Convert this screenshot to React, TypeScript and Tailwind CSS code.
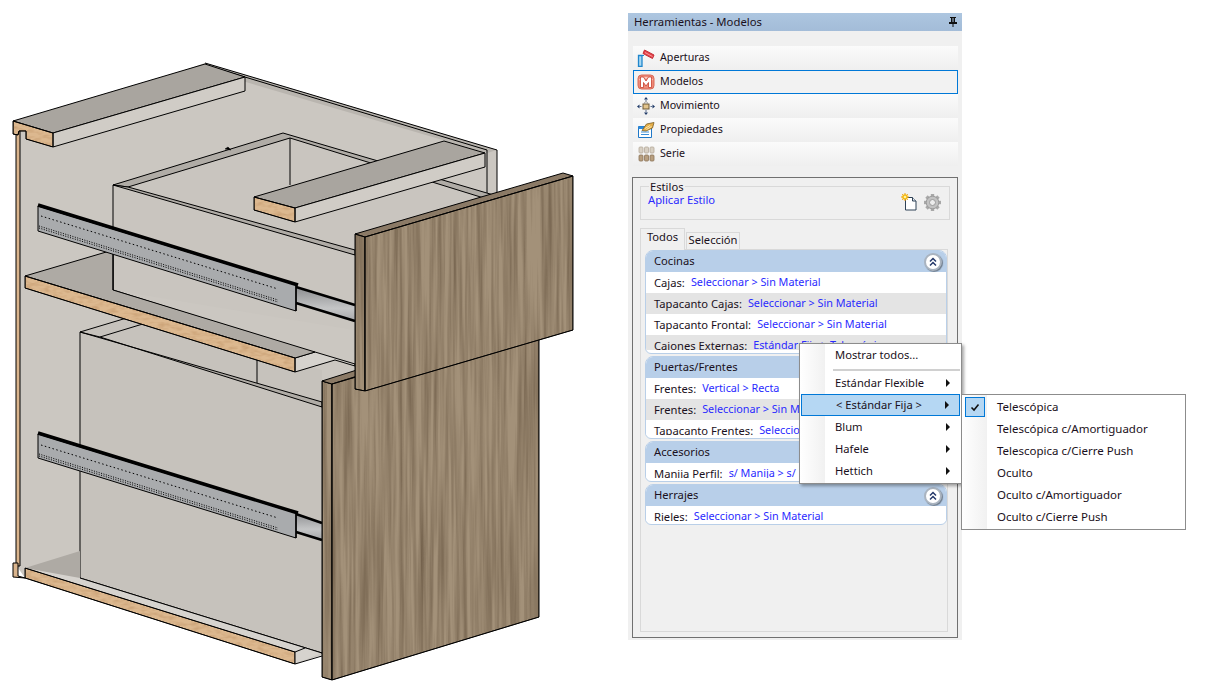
const uiFont = "font-['Noto_Sans',sans-serif]";

const tools = [
  { name: "Aperturas", icon: <AperturasIcon /> },
  { name: "Modelos", icon: <ModelosIcon />, active: true },
  { name: "Movimiento", icon: <MovimientoIcon /> },
  { name: "Propiedades", icon: <PropiedadesIcon /> },
  { name: "Serie", icon: <SerieIcon /> },
];

const groups = [
  {
    title: "Cocinas",
    h: "h-[104px]",
    rows: [
      ["Cajas:", "Seleccionar > Sin Material"],
      ["Tapacanto Cajas:", "Seleccionar > Sin Material"],
      ["Tapacanto Frontal:", "Seleccionar > Sin Material"],
      ["Cajones Externas:", "Estándar Fija > Telescópica"],
    ],
  },
  {
    title: "Puertas/Frentes",
    h: "h-[83px]",
    rows: [
      ["Frentes:", "Vertical > Recta"],
      ["Frentes:", "Seleccionar > Sin Material"],
      ["Tapacanto Frentes:", "Seleccionar > Sin Material"],
    ],
  },
  {
    title: "Accesorios",
    h: "h-[41px]",
    rows: [["Manija Perfil:", "s/ Manija > s/ Manija"]],
  },
  {
    title: "Herrajes",
    h: "h-[41px]",
    rows: [["Rieles:", "Seleccionar > Sin Material"]],
  },
];

function AperturasIcon() {
  return (
    <svg width="18" height="18" viewBox="0 0 18 18">
      <path d="M1.500 6.500h3.500v11h-3.500z" fill="#a9d8f2" stroke="#1f86cc" strokeWidth="1.300" />
      <path d="M5 6.500h2" stroke="#1f86cc" />
      <path d="M6 4.500 7.500 1l9.500 5-1.500 3.500z" fill="#e63f48" stroke="#c23038" />
      <path d="M8 3.500l7.500 4" stroke="#f59a9a" />
    </svg>
  );
}

function ModelosIcon() {
  return (
    <svg width="18" height="18" viewBox="0 0 18 18">
      <rect x="1" y="2" width="16" height="14" rx="3.500" fill="#ee8a78" stroke="#d86a58" />
      <path d="M2.500 7C6 4 12 4 15.500 7" fill="none" stroke="#fbd3c8" strokeWidth="1.500" />
      <path d="M3.500 14.500V4h3L9 8l2.500-4h3v10.500h-3V9.500L9 13 6.500 9.500v5z" fill="#fff" stroke="#c8402e" strokeWidth=".8" />
    </svg>
  );
}

function MovimientoIcon() {
  return (
    <svg width="18" height="18" viewBox="0 0 18 18">
      <rect x="6" y="7" width="6" height="5" fill="#e2c48c" stroke="#6e5a36" />
      <path d="M7.500 6.500c0-2.500 3-2.500 3 0" fill="none" stroke="#8a8a8a" />
      <path d="M9 0 11 2.500H7zM9 18 7 15.500h4zM0 9.500 2.500 7.500v4zM18 9.500 15.500 7.500v4z" fill="#1f3a68" />
      <path d="M9 2.500V4M9 13v2.500M2.500 9.500H4.500M13.500 9.500h2" stroke="#5c6f8f" />
    </svg>
  );
}

function PropiedadesIcon() {
  return (
    <svg width="18" height="18" viewBox="0 0 18 18">
      <path d="M1.500 5.500h13v11h-13z" fill="#fff" stroke="#1f78c8" />
      <path d="M1.500 5.500h13v2.500h-13z" fill="#2f8ad8" />
      <path d="M4 11h8M4 13.500h8" stroke="#3b8ed8" />
      <path d="M5 9.500 9.500 3 17 1.500 15.500 7 9 10z" fill="#e6b04a" stroke="#7a5c22" strokeWidth=".8" />
      <path d="M8 7.500l5-3M9.500 8.500l5-3" stroke="#fff3c8" strokeWidth=".8" />
    </svg>
  );
}

function SerieIcon() {
  const cols = [1, 6.500, 12];
  return (
    <svg width="17" height="16" viewBox="0 0 17 16">
      {cols.map(x => <rect key={`t${x}`} x={x} y="1" width="4" height="6" rx="1" fill="#d8d0c4" stroke="#b5aa9a" strokeWidth=".8" />)}
      {cols.map(x => <rect key={`b${x}`} x={x} y="9" width="4" height="6" rx="1" fill="#b89f80" stroke="#8c7458" strokeWidth=".8" />)}
    </svg>
  );
}

function NewStyleIcon() {
  return (
    <svg width="17" height="18" viewBox="0 0 17 18">
      <path d="M4.500 4.500h7l3.500 3.500v9h-10.500z" fill="#fff" stroke="#2f4256" />
      <path d="M11.500 4.500V8h3.500" fill="#dfe6ee" stroke="#2f4256" />
      <path d="M4 0v8M0 4h8M1.200 1.200l5.600 5.600M6.800 1.200l-5.600 5.600" stroke="#f0a010" />
      <circle cx="4" cy="4" r="2.800" fill="#f5b810" />
      <circle cx="4" cy="4" r="1.300" fill="#fdf2a0" />
    </svg>
  );
}

function GearIcon() {
  const teeth = [0, 45, 90, 135];
  return (
    <svg width="17" height="17" viewBox="0 0 17 17">
      {teeth.map(a => <rect key={a} x="6.800" y="0" width="3.400" height="17" fill="#a8a8a8" transform={`rotate(${a} 8.500 8.500)`} />)}
      <circle cx="8.500" cy="8.500" r="6.300" fill="#c2c2c2" stroke="#9a9a9a" />
      <circle cx="8.500" cy="8.500" r="3" fill="#ececec" stroke="#9a9a9a" />
    </svg>
  );
}

function CollapseButton() {
  return (
    <span className="flex h-[18px] w-[18px] items-center justify-center rounded-full border-2 border-[#aab4c0] bg-white shadow-[1px_1px_1px_#6f7c8c]">
      <svg width="10" height="10" viewBox="0 0 10 10" fill="none" stroke="#24386a" strokeWidth="1.500">
        <path d="M2 4.500 5 1.500l3 3M2 8.500l3-3 3 3" />
      </svg>
    </span>
  );
}

function CabinetDrawing() {
  return (
    <svg width="628" height="682" viewBox="0 0 628 682" className="shrink-0" stroke="#000" strokeWidth="1" strokeLinejoin="round">
      <defs>
        <filter id="grain" x="0" y="0" width="100%" height="100%" colorInterpolationFilters="sRGB">
          <feTurbulence type="fractalNoise" baseFrequency="0.25 0.006" numOctaves="3" seed="11" result="n" />
          <feColorMatrix in="n" type="matrix" values="0 0 0 0 0.40  0 0 0 0 0.33  0 0 0 0 0.25  1.2 0 0 0 -0.38" result="dark" />
          <feMerge>
            <feMergeNode in="SourceGraphic" />
            <feMergeNode in="dark" />
          </feMerge>
          <feComposite in2="SourceAlpha" operator="in" />
        </filter>
        <filter id="edge" x="0" y="0" width="100%" height="100%" colorInterpolationFilters="sRGB">
          <feTurbulence type="fractalNoise" baseFrequency="0.12 0.3" numOctaves="2" seed="3" result="n" />
          <feColorMatrix in="n" type="matrix" values="0 0 0 0 0.72  0 0 0 0 0.54  0 0 0 0 0.36  1 0 0 0 -0.4" result="dark" />
          <feMerge>
            <feMergeNode in="SourceGraphic" />
            <feMergeNode in="dark" />
          </feMerge>
          <feComposite in2="SourceAlpha" operator="in" />
        </filter>
        <linearGradient id="slide" x1="0" y1="0" x2="0" y2="1">
          <stop offset="0" stopColor="#8f9092" />
          <stop offset="0.6" stopColor="#c4c5c6" />
          <stop offset="1" stopColor="#a5a6a8" />
        </linearGradient>
      </defs>

      {/* back and side panels */}
      <path d="M16 130 205 63 497 150V400H330L322 655 295 664 25 578 16 565z" fill="#cbc7c1" stroke="none" />
      <path d="M205 63 497 150 487 153 205 70z" fill="#b9b5af" stroke="none" />
      <path d="M205 63 497 150V200M215 68 487 150V200" fill="none" />
      <path d="M16 130H20V566H16z" fill="#d9b48d" />

      {/* top back rail */}
      <path d="M13 121 205 64 245 77 53 133z" fill="#a9a59f" />
      <path d="M53 133 245 77V91L53 147z" fill="#d0ccc6" />
      <g filter="url(#edge)">
        <path d="M13 121 53 133V147L26 139V131L19 131 18 135 13 134z" fill="#dcb88f" />
      </g>
      <path d="M13 121 53 133V147L26 139V131L19 131 18 135 13 134z" fill="none" />

      {/* upper drawer box */}
      <path d="M113 185 283 133 497 196V300L354 330 113 290z" fill="#c9c5bf" stroke="none" />
      <path d="M113 185 283 133 497 196 487 199 290 138 128 187z" fill="#b0aca6" />
      <path d="M113 185 355 255 355 250 128 187z" fill="#b0aca6" />
      <path d="M290 138V185" fill="none" />
      <path d="M113 185V290L310 352" fill="none" />
      <path d="M225 149 228 147 231 150z" fill="#000" strokeWidth=".5" />

      {/* lower drawer box */}
      <path d="M80 332 130 318 322 370V653L80 578z" fill="#c6c2bc" stroke="none" />
      <path d="M295 358 315 352 355 364V366L335 360 295 372z" fill="#d6d3ce" />
      <path d="M80 332 322 402 322 407 100 337z" fill="#b0aca6" />
      <path d="M80 332V578L322 653M257 360V383" fill="none" />
      <path d="M80 332 130 317M100 337 146 323" fill="none" />

      {/* middle shelf */}
      <path d="M25 276 113 250V290L315 352 295 358z" fill="#aeaaa4" />
      <path d="M113 250V290" fill="none" />
      <g filter="url(#edge)">
        <path d="M25 276 295 358V372L25 288z" fill="#dcb88f" />
      </g>
      <path d="M25 276 295 358V372L25 288z" fill="none" />

      {/* bottom panel */}
      <path d="M25 568 80 551V578L295 652z" fill="#aeaaa4" stroke="none" />
      <path d="M80 578 322 653 295 664 295 652 25 568z" fill="#d6d3ce" stroke="none" />
      <path d="M80 578 322 653M295 652 305 648" fill="none" />
      <g filter="url(#edge)">
        <path d="M25 568 295 652V664L25 578z" fill="#dcb88f" />
      </g>
      <path d="M25 568 295 652V664L25 578zM295 664 322 656" fill="none" />
      <path d="M13 563H18V576L25 578 13 577z" fill="#d9b48d" />

      {/* upper slide */}
      <path d="M296 288 355 306V322L296 303z" fill="url(#slide)" stroke="none" />
      <path d="M296 287 355 305M296 303 355 321" fill="none" strokeWidth="2.500" />
      <path d="M38 206 296 285V311L38 231z" fill="#a9abad" />
      <path d="M38 205 298 285" fill="none" strokeWidth="3.500" />
      <path d="M41 216 278 289" fill="none" strokeWidth="1" strokeDasharray="1.500 2.500" />
      <path d="M39 228 278 302M39 226 278 300" fill="none" strokeWidth="1" strokeDasharray="1 1.500" />
      <path d="M296 285V311" fill="none" strokeWidth="1.500" />

      {/* lower slide */}
      <path d="M296 513 322 523V540L296 532z" fill="url(#slide)" stroke="none" />
      <path d="M296 514 322 523M296 532 322 540" fill="none" strokeWidth="2.500" />
      <path d="M38 434 296 513V538L38 458z" fill="#a9abad" />
      <path d="M38 433 298 513" fill="none" strokeWidth="3.500" />
      <path d="M41 445 278 518" fill="none" strokeWidth="1" strokeDasharray="1.500 2.500" />
      <path d="M39 456 278 530M39 454 278 528" fill="none" strokeWidth="1" strokeDasharray="1 1.500" />
      <path d="M296 513V538" fill="none" strokeWidth="1.500" />

      {/* center stretcher, sits above the drawer */}
      <path d="M254 197 444 141 485 153 295 208z" fill="#a9a59f" />
      <path d="M295 208 485 153V167L295 222z" fill="#d0ccc6" />
      <g filter="url(#edge)">
        <path d="M254 197 295 208V222L254 210z" fill="#dcb88f" />
      </g>
      <path d="M254 197 295 208V222L254 210z" fill="none" />

      {/* lower door */}
      <g filter="url(#grain)">
        <path d="M322 381 332 384V680L322 677z" fill="#a39179" />
      </g>
      <path d="M322 381 332 384V680L322 677z" fill="none" />
      <path d="M322 381 360 369 370 372 332 384z" fill="#8b7a66" />
      <g filter="url(#grain)">
        <path d="M332 384 539 323V617L332 680z" fill="#a39179" />
      </g>
      <path d="M332 384 539 323V617L332 680z" fill="none" />

      {/* upper door */}
      <path d="M355 234 563 173 573 176 365 237z" fill="#8b7a66" />
      <g filter="url(#grain)">
        <path d="M355 234 365 237V391L355 389z" fill="#a39179" />
      </g>
      <path d="M355 234 365 237V391L355 389z" fill="none" />
      <g filter="url(#grain)">
        <path d="M365 237 573 176V330L365 391z" fill="#a39179" />
      </g>
      <path d="M365 237 573 176V330L365 391z" fill="none" />
    </svg>
  );
}

function GroupCard({ group }: { group: (typeof groups)[number] }) {
  return (
    <div className={`flex flex-col overflow-hidden rounded-t-lg rounded-b-md border border-[#b9cfe8] bg-white ${group.h}`}>
      <div className="flex h-[21px] shrink-0 items-center justify-between bg-[#b8cfe9] pr-[4px] pl-[8px]">
        <span className="-translate-y-px">{group.title}</span>
        <CollapseButton />
      </div>
      <div className="mb-[3px] min-h-0 flex-1 overflow-hidden">
        {group.rows.map(([label, value], i) => (
          <div key={i} className={`flex h-[21px] items-center gap-[6px] overflow-hidden pl-[8px] whitespace-nowrap ${i % 2 ? "bg-[#e4e4e4]" : "bg-white"}`}>
            <span>{label}</span>
            <span className="text-[10.8px] text-[#2a2aff]">{value}</span>
          </div>
        ))}
      </div>
    </div>
  );
}

function MenuRow({ label, selected, arrow }: { label: string; selected?: boolean; arrow?: boolean }) {
  return (
    <div className={`mx-px flex h-[22px] items-center justify-between pr-[10px] pl-[34px] ${selected ? "border border-[#0078d7] bg-[#b5d7f3] pl-[33px]" : ""}`}>
      <span>{label}</span>
      {arrow && <span className="h-0 w-0 border-y-[4px] border-l-[4px] border-y-transparent border-l-[#111]" />}
    </div>
  );
}

export default function App() {
  return (
    <div className={`relative flex h-[682px] w-[1205px] overflow-hidden bg-white text-[11.2px] leading-none text-[#1a1020] ${uiFont}`}>
      <CabinetDrawing />

      <div className="mt-[13px] flex h-[627px] w-[334px] shrink-0 flex-col bg-[#f0f0f0]">
        <div className="flex h-[18px] shrink-0 items-center justify-between bg-gradient-to-b from-[#adc6e0] to-[#a3bcd8] pr-[5px] pl-[6px] text-[11.3px]">
          <span>Herramientas - Modelos</span>
          <svg width="8" height="10" viewBox="0 0 8 10" fill="#111">
            <path d="M1 0h6v1H6v4h2v2H4.500v3h-1V7H0V5h2V1H1zM3.500 1v4h1V1z" />
          </svg>
        </div>

        <div className="mt-[15px] flex flex-col pr-[4px] pl-[5px] text-[10.7px]">
          {tools.map(t => (
            <div
              key={t.name}
              className={`flex h-[24px] items-center gap-[5px] ${t.active ? "border border-[#0078d7] bg-[#f2f2f2] pl-[3px]" : "bg-gradient-to-b from-[#fbfbfb] to-[#efefef] pl-[4px]"}`}
            >
              <span className="flex w-[18px] justify-center">{t.icon}</span>
              <span className="-translate-y-px">{t.name}</span>
            </div>
          ))}
        </div>

        <div className="mx-[4px] mt-[11px] mb-[2px] flex min-h-0 flex-1 flex-col border border-[#707070] px-[7px] pt-[8px]">
          <div className="relative h-[34px] shrink-0 border border-[#d9d9d9] pt-[7px] pl-[7px]">
            <span className="absolute -top-[6px] left-[8px] bg-[#f0f0f0] px-px">Estilos</span>
            <span className="text-[#2a2aff]">Aplicar Estilo</span>
            <div className="absolute top-[6px] right-[8px] flex items-center gap-[6px]">
              <NewStyleIcon />
              <GearIcon />
            </div>
          </div>

          <div className="mt-[8px] flex h-[22px] shrink-0 items-end">
            <div className="relative z-10 flex h-[22px] w-[45px] items-center justify-center border border-b-0 border-[#d9d9d9] bg-[#f0f0f0] pb-[5px]">Todos</div>
            <div className="ml-px flex h-[18px] w-[54px] items-center justify-center border border-b-0 border-[#d9d9d9] pb-[4px]">Selección</div>
          </div>

          <div className="-mt-px mr-[2px] mb-[5px] flex min-h-0 flex-1 flex-col gap-[2px] border border-[#d9d9d9] pl-[4px]">
            {groups.map(g => <GroupCard key={g.title} group={g} />)}
          </div>
        </div>
      </div>

      {/* open dropdown menus lie over the panel */}
      <div className="absolute top-[343px] left-[799px] h-[141px] w-[163px] border border-[#8c8c8c] bg-white shadow-[2px_2px_3px_rgba(0,0,0,0.35)]">
        <div className="absolute inset-y-0 left-0 w-[25px] bg-gradient-to-r from-white to-[#f1f1f1]" />
        <div className="relative flex flex-col">
          <MenuRow label="Mostrar todos..." />
          <div className="mt-[3px] mr-px mb-px ml-[33px] h-[2px] bg-[#d0d0d0]" />
          <MenuRow label="Estándar Flexible" arrow />
          <MenuRow label="< Estándar Fija >" selected arrow />
          <MenuRow label="Blum" arrow />
          <MenuRow label="Hafele" arrow />
          <MenuRow label="Hettich" arrow />
        </div>
      </div>

      <div className="absolute top-[394px] left-[961px] h-[136px] w-[225px] border border-[#8c8c8c] bg-white text-[11.5px]">
        <div className="absolute inset-y-0 left-0 w-[25px] bg-gradient-to-r from-white to-[#f1f1f1]" />
        <div className="absolute top-[2px] left-[3px] flex h-[20px] w-[20px] items-center justify-center border border-[#0078d7] bg-[#b5d7f3]">
          <svg width="10" height="9" viewBox="0 0 10 9" fill="none" stroke="#111" strokeWidth="1.600">
            <path d="M1.500 4.500 4 7l4.500-5.500" />
          </svg>
        </div>
        <div className="relative flex flex-col pt-px">
          {["Telescópica", "Telescópica c/Amortiguador", "Telescopica c/Cierre Push", "Oculto", "Oculto c/Amortiguador", "Oculto c/Cierre Push"].map(s => (
            <MenuRow key={s} label={s} />
          ))}
        </div>
      </div>
    </div>
  );
}
